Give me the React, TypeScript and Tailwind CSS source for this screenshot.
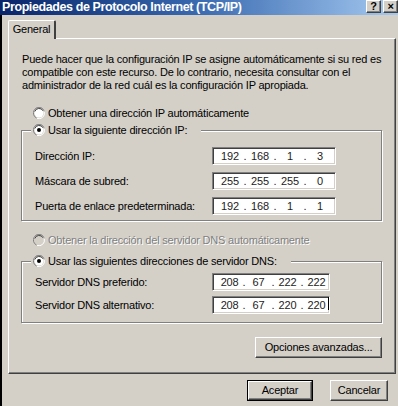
import React from 'react';

const raised =
  'border border-t-white border-l-white border-r-[#404040] border-b-[#404040] shadow-[inset_-1px_-1px_0_#808080]';

function Radio({ checked, disabled }: { checked?: boolean; disabled?: boolean }) {
  return (
    <svg width="12" height="12" viewBox="0 0 12 12" className="shrink-0">
      <path d="M11 3.5A5.5 5.5 0 0 0 1 3.5 5.5 5.5 0 0 0 3.5 11" fill="none" stroke="#808080" strokeWidth="1" />
      <circle cx="6" cy="6" r="4.5" fill={disabled ? '#d4d0c8' : '#fff'} />
      <path d="M10 3.8A4.5 4.5 0 0 0 1.8 4.5" fill="none" stroke="#404040" strokeWidth="1" />
      <path d="M11.3 5A5.5 5.5 0 0 1 4 11.4" fill="none" stroke="#fff" strokeWidth="1" />
      {checked && <circle cx="6" cy="6" r="2" fill="#000" />}
    </svg>
  );
}

function IpBox({ parts, width, caret }: { parts: string[]; width: string; caret?: boolean }) {
  return (
    <div
      className={`${width} h-[18px] bg-white border border-t-[#808080] border-l-[#808080] border-r-white border-b-white shadow-[inset_1px_1px_0_#404040,inset_-1px_-1px_0_#d4d0c8] flex items-center pl-[4px] overflow-hidden text-[#222]`}
    >
      {parts.map((p, i) => (
        <React.Fragment key={i}>
          <span className="w-[26px] text-center relative">
            {p}
            {caret && i === 3 && <span className="absolute right-[0px] top-[0px] w-px h-[13px] bg-black" />}
          </span>
          {i < 3 && <span className="w-[4px] text-center">.</span>}
        </React.Fragment>
      ))}
    </div>
  );
}

function Row({ label, children }: { label: string; children: React.ReactNode }) {
  return (
    <div className="flex items-center h-[18px]">
      <span className="w-[177px]">{label}</span>
      {children}
    </div>
  );
}

export default function App() {
  return (
    <div
      className="w-[398px] h-[406px] bg-[#d4d0c8] flex flex-col overflow-hidden text-[11px] tracking-[-0.2px] text-black"
      style={{ fontFamily: '"Liberation Sans", Arial, sans-serif' }}
    >
      {/* title bar */}
      <div className="h-[15px] shrink-0 flex items-center bg-gradient-to-r from-[#0a246a] via-[#3a6ab0] to-[#a6caf0]">
        <span className="pl-[2px] text-white font-bold text-[12.5px] leading-none flex-1 tracking-[-0.4px]">
          Propiedades de Protocolo Internet (TCP/IP)
        </span>
        <div className="flex gap-[2px] self-start">
          <div className={`w-[15px] h-[13px] bg-[#d4d0c8] ${raised} flex items-center justify-center font-bold text-[11px] leading-none`}>?</div>
          <div className={`w-[15px] h-[13px] bg-[#d4d0c8] ${raised} flex items-center justify-center font-bold text-[11px] leading-none`}>×</div>
        </div>
      </div>

      <div className="flex-1 border-l-2 border-black flex flex-col">
        {/* tab */}
        <div className="mt-[5px] ml-[6px] w-[48px] h-[19px] relative z-10 bg-[#d4d0c8] border-t border-l border-t-white border-l-white border-r-2 border-r-[#404040] rounded-t-[2px] flex items-center justify-center pb-[1px]">
          General
        </div>

        {/* tab panel */}
        <div className="-mt-[1px] ml-[6px] w-[388px] h-[336px] border-t border-l border-t-white border-l-white border-r border-b border-r-[#404040] border-b-[#404040] shadow-[inset_-1px_-1px_0_#808080] flex flex-col">
          <p className="ml-[13px] mt-[14px] leading-[13px] w-[362px]">
            Puede hacer que la configuración IP se asigne automáticamente si su red es compatible con este recurso. De lo contrario, necesita consultar con el administrador de la red cuál es la configuración IP apropiada.
          </p>

          <div className="ml-[24px] mt-[14px] h-[14px] flex items-center gap-[3px]">
            <Radio />
            <span>Obtener una dirección IP automáticamente</span>
          </div>

          {/* group 1 */}
          <div className="relative ml-[12px] mt-[10px] w-[361px] h-[91px] border border-[#808080] shadow-[inset_1px_1px_0_#fff,1px_1px_0_#fff]">
            <div className="absolute left-[9px] top-[-8px] h-[14px] bg-[#d4d0c8] pl-[2px] pr-[14px] flex items-center gap-[3px]">
              <Radio checked />
              <span>Usar la siguiente dirección IP:</span>
            </div>
            <div className="pl-[13px] pt-[16px] flex flex-col gap-[7px]">
              <Row label="Dirección IP:">
                <IpBox width="w-[124px]" parts={['192', '168', '1', '3']} />
              </Row>
              <Row label="Máscara de subred:">
                <IpBox width="w-[124px]" parts={['255', '255', '255', '0']} />
              </Row>
              <Row label="Puerta de enlace predeterminada:">
                <IpBox width="w-[124px]" parts={['192', '168', '1', '1']} />
              </Row>
            </div>
          </div>

          <div className="ml-[24px] mt-[12px] h-[14px] flex items-center gap-[3px] text-[#808080] [text-shadow:1px_1px_0_#fff]">
            <Radio disabled />
            <span>Obtener la dirección del servidor DNS automáticamente</span>
          </div>

          {/* group 2 */}
          <div className="relative ml-[12px] mt-[14px] w-[361px] h-[62px] border border-[#808080] shadow-[inset_1px_1px_0_#fff,1px_1px_0_#fff]">
            <div className="absolute left-[9px] top-[-8px] h-[14px] bg-[#d4d0c8] pl-[2px] pr-[14px] flex items-center gap-[3px]">
              <Radio checked />
              <span>Usar las siguientes direcciones de servidor DNS:</span>
            </div>
            <div className="pl-[13px] pt-[11px] flex flex-col gap-[5px]">
              <Row label="Servidor DNS preferido:">
                <IpBox width="w-[118px]" parts={['208', '67', '222', '222']} />
              </Row>
              <Row label="Servidor DNS alternativo:">
                <IpBox width="w-[118px]" parts={['208', '67', '220', '220']} caret />
              </Row>
            </div>
          </div>

          <div className="mt-[14px] ml-[246px] w-[127px] h-[21px]">
            <button className={`w-full h-full bg-[#d4d0c8] ${raised} flex items-center justify-center`}>
              Opciones avanzadas...
            </button>
          </div>
        </div>

        {/* footer buttons */}
        <div className="mt-[6px] flex">
          <div className="ml-[245px] w-[66px] h-[21px] border border-black">
            <button className={`w-full h-full bg-[#d4d0c8] ${raised} flex items-center justify-center`}>
              Aceptar
            </button>
          </div>
          <button className={`ml-[17px] w-[58px] h-[21px] bg-[#d4d0c8] ${raised} flex items-center justify-center`}>
            Cancelar
          </button>
        </div>
      </div>
    </div>
  );
}
